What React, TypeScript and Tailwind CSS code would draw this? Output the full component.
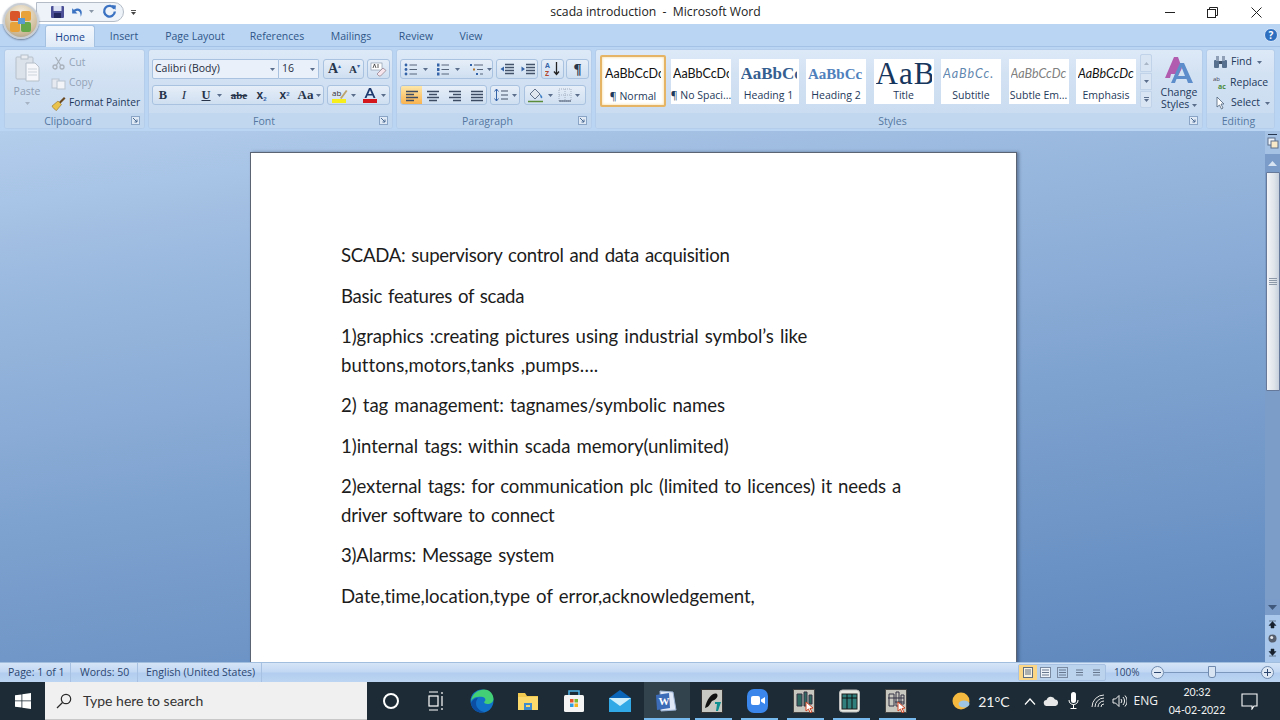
import React from "react";

const ui = "font-['Open_Sans',sans-serif]";

function Caret({ c = "#5b6f8c" }: { c?: string }) {
  return (
    <svg width="5" height="3" viewBox="0 0 5 3" className="shrink-0">
      <path d="M0 0h5L2.500 3z" fill={c} />
    </svg>
  );
}

function Launcher() {
  return (
    <svg width="9" height="9" viewBox="0 0 9 9" className="shrink-0">
      <rect x=".5" y=".5" width="8" height="8" fill="#dfe9f5" stroke="#8aa5c6" />
      <path d="M2 2l4 4M6 3.500V6H3.500" stroke="#4a6a92" fill="none" />
    </svg>
  );
}

function Group({ w, label, children, launcher = true }: { w: string; label: string; children: React.ReactNode; launcher?: boolean }) {
  return (
    <div className={`${w} h-full flex flex-col rounded-[3px] border border-[#b3cdea] bg-[linear-gradient(180deg,#dde9f7_0%,#d3e2f3_30%,#c7daf0_100%)] overflow-hidden`}>
      <div className="flex-1 min-h-0">{children}</div>
      <div className="h-[15px] shrink-0 flex items-center bg-[#c1d7f0] pr-[4px]">
        <span className="flex-1 text-center text-[10.5px] text-[#55779f] leading-none pt-[1px]">{label}</span>
        {launcher && <Launcher />}
      </div>
    </div>
  );
}

function BtnBox({ w, children, m = "" }: { w: string; children: React.ReactNode; m?: string }) {
  return (
    <div className={`${w} ${m} h-[20px] flex items-center rounded-[3px] border border-[#a9c2df] bg-[linear-gradient(180deg,#e6eef8,#cfdff1)] shrink-0 overflow-hidden`}>
      {children}
    </div>
  );
}

function Cell({ w, children, cls = "justify-center" }: { w: string; children: React.ReactNode; cls?: string }) {
  return <div className={`${w} h-full flex items-center gap-[3px] shrink-0 ${cls}`}>{children}</div>;
}

function Lines({ kind }: { kind: "l" | "c" | "r" | "j" }) {
  const rows = [2, 5, 8, 11];
  const short = [0, 1, 0, 1];
  return (
    <svg width="14" height="13" viewBox="0 0 14 13">
      {rows.map((y, i) => {
        let x1 = 1, x2 = 13;
        if (short[i] && kind === "l") x2 = 9;
        if (short[i] && kind === "r") x1 = 5;
        if (short[i] && kind === "c") { x1 = 3; x2 = 11; }
        return <path key={y} d={`M${x1} ${y + 0.5}H${x2}`} stroke="#3d4c63" strokeWidth="1.6" />;
      })}
    </svg>
  );
}

function BulletIcon({ num }: { num?: boolean }) {
  return (
    <svg width="14" height="13" viewBox="0 0 14 13">
      {[2, 6.5, 11].map((y) => (
        <g key={y}>
          {num ? <rect x="1" y={y - 1.5} width="2.5" height="3" fill="#3563a8" /> : <circle cx="2" cy={y} r="1.4" fill="#3563a8" />}
          <path d={`M5.5 ${y}H13`} stroke="#57657a" strokeWidth="1" />
        </g>
      ))}
    </svg>
  );
}

function MultiIcon() {
  return (
    <svg width="15" height="13" viewBox="0 0 15 13">
      <rect x="1" y="1" width="2" height="2" fill="#3563a8" />
      <path d="M5 2H14" stroke="#57657a" />
      <rect x="4" y="5.500" width="2" height="2" fill="#b2772d" />
      <path d="M8 6.500H14" stroke="#57657a" />
      <rect x="7" y="10" width="2" height="2" fill="#3563a8" />
      <path d="M11 11H14" stroke="#57657a" />
    </svg>
  );
}

function IndentIcon({ flip }: { flip?: boolean }) {
  return (
    <svg width="15" height="13" viewBox="0 0 15 13">
      {[1.5, 4.5, 7.5, 10.5].map((y) => (
        <path key={y} d={`M5 ${y}H14`} stroke="#44536a" strokeWidth="1.3" />
      ))}
      <path d={flip ? "M0.5 6L4 3.500V8.500z" : "M4 6L0.5 3.500V8.500z"} fill="#3563a8" />
    </svg>
  );
}

function StyleItem({ label, preview, cls }: { label: string; preview: string; cls: string }) {
  return (
    <div className="w-[60px] h-[45px] bg-white flex flex-col items-center shrink-0 overflow-hidden">
      <div className={`h-[30px] w-[56px] flex items-center justify-start overflow-hidden whitespace-nowrap leading-[30px] ${cls}`}>{preview}</div>
      <div className="text-[10.5px] leading-[12px] text-[#1e395b] whitespace-nowrap">{label}</div>
    </div>
  );
}

function Ribbon() {
  return (
    <div className={`h-[84px] flex gap-[3px] pl-[4px] pr-[3px] pt-[2px] pb-[2px] bg-[#bad5f4] ${ui}`}>
      <Group w="w-[141px]" label="Clipboard">
        <div className="flex h-full">
          <div className="w-[42px] ml-[1px] flex flex-col items-center pt-[4px]">
            <svg width="27" height="28" viewBox="0 0 27 28">
              <rect x="2" y="3" width="17" height="22" rx="1" fill="#dbe2ea" stroke="#b6bfca" />
              <rect x="7" y="1" width="7" height="4" fill="#e9edf2" stroke="#b6bfca" />
              <path d="M12 9h9l4 4v14H12z" fill="#f5f7fa" stroke="#b6bfca" />
              <path d="M14 15h9M14 18h9M14 21h9" stroke="#ced5dd" />
            </svg>
            <div className="text-[10.5px] text-[#8f9eb2] mt-[2px] leading-[14px]">Paste</div>
            <div className="mt-[4px]"><Caret c="#a6b3c4" /></div>
          </div>
          <div className="flex flex-col pt-[2px] ml-[3px]">
            <div className="h-[21px] flex items-center gap-[3px]">
              <svg width="15" height="14" viewBox="0 0 14 14"><path d="M4 1l5 8M10 1L5 9" stroke="#a9b1bb" strokeWidth="1.2" fill="none" /><circle cx="3.5" cy="11" r="2" fill="none" stroke="#a9b1bb" strokeWidth="1.3" /><circle cx="10.5" cy="11" r="2" fill="none" stroke="#a9b1bb" strokeWidth="1.3" /></svg>
              <span className="text-[10.2px] text-[#94a3b6]">Cut</span>
            </div>
            <div className="h-[20px] flex items-center gap-[3px]">
              <svg width="15" height="13" viewBox="0 0 15 13"><rect x="1" y="2" width="7" height="9" fill="#e6eaf0" stroke="#b9c3cf" /><rect x="6" y="4" width="8" height="8" fill="#f2f4f7" stroke="#b9c3cf" /></svg>
              <span className="text-[10.2px] text-[#94a3b6]">Copy</span>
            </div>
            <div className="h-[20px] flex items-center gap-[3px]">
              <svg width="15" height="15" viewBox="0 0 15 15"><path d="M8 6l5-5 1.500 1.500-5 5z" fill="#6b4a22" /><path d="M1 10l6-5 3.500 3.500-5 6c-1.500-.5-3.500-2.500-4.500-4.500z" fill="#e8c24b" stroke="#93702a" strokeWidth=".6" /></svg>
              <span className="text-[10.2px] text-[#1e395b] whitespace-nowrap">Format Painter</span>
            </div>
          </div>
        </div>
      </Group>

      <Group w="w-[245px]" label="Font">
        <div className="pl-[3px] pt-[9px]">
          <div className="flex h-[20px]">
            <div className="w-[127px] h-[20px] flex items-center justify-between border border-[#a9c2df] bg-[#e9f0f9] pl-[2px] pr-[3px] rounded-l-[2px]">
              <span className="text-[10.5px] text-[#1f2c40]">Calibri (Body)</span>
              <Caret />
            </div>
            <div className="w-[40px] h-[20px] flex items-center justify-between border border-l-0 border-[#a9c2df] bg-[#e9f0f9] pl-[3px] pr-[3px] rounded-r-[2px]">
              <span className="text-[10.5px] text-[#1f2c40]">16</span>
              <Caret />
            </div>
            <BtnBox w="w-[41px]" m="ml-[4px]">
              <Cell w="w-[21px]"><span className="font-['Liberation_Serif',serif] font-bold text-[14px] text-[#28364c] leading-none">A</span><span className="text-[6px] -ml-[3px] -mt-[6px] text-[#3563a8]">▴</span></Cell>
              <Cell w="w-[19px]"><span className="font-['Liberation_Serif',serif] font-bold text-[11px] text-[#28364c] leading-none">A</span><span className="text-[6px] -ml-[3px] -mt-[6px] text-[#3563a8]">▾</span></Cell>
            </BtnBox>
            <BtnBox w="w-[23px]" m="ml-[3px]">
              <Cell w="w-full">
                <svg width="17" height="15" viewBox="0 0 17 15"><rect x="1" y="1" width="11" height="7" fill="#fff" stroke="#7c8ba0" strokeWidth=".6" /><path d="M3 6l1.500-4L6 6M8 6V2" stroke="#333" strokeWidth=".8" fill="none" /><path d="M7 12l6-6 3 2.500-5.500 5.500H9z" fill="#f7e5ee" stroke="#8c7b86" strokeWidth=".7" /></svg>
              </Cell>
            </BtnBox>
          </div>
          <div className="flex mt-[6px]">
            <BtnBox w="w-[172px]">
              <Cell w="w-[20px]"><span className="font-['Liberation_Serif',serif] font-bold text-[12.5px] text-[#27344a]">B</span></Cell>
              <Cell w="w-[22px]"><span className="font-['Liberation_Serif',serif] italic text-[13px] text-[#27344a]">I</span></Cell>
              <Cell w="w-[33px]"><span className="font-['Liberation_Serif',serif] font-bold underline text-[12.5px] text-[#27344a]">U</span><span className="ml-[3px]"><Caret /></span></Cell>
              <Cell w="w-[22px]"><span className="font-['Liberation_Serif',serif] line-through font-bold text-[11px] text-[#27344a]">abe</span></Cell>
              <Cell w="w-[23px]"><span className="font-['Liberation_Sans',sans-serif] font-bold text-[12px] text-[#27344a]">x<sub className="text-[6px] text-[#3563a8]">2</sub></span></Cell>
              <Cell w="w-[23px]"><span className="font-['Liberation_Sans',sans-serif] font-bold text-[12px] text-[#27344a]">x<sup className="text-[6px] text-[#3563a8]">2</sup></span></Cell>
              <Cell w="w-[27px]"><span className="font-['Liberation_Serif',serif] font-bold text-[13px] text-[#27344a]">Aa</span><Caret /></Cell>
            </BtnBox>
            <BtnBox w="w-[63px]" m="ml-[3px]">
              <Cell w="w-[31px]">
                <svg width="17" height="17" viewBox="0 0 17 17"><rect x="1" y="12" width="14" height="4" fill="#f6ee1d" /><text x="1" y="9" fontSize="8" fontFamily="Open Sans" fill="#333">ab</text><path d="M9 11l6-8 1.500 1-6 8z" fill="#bda36d" /></svg>
                <Caret />
              </Cell>
              <Cell w="w-[30px]">
                <svg width="16" height="16" viewBox="0 0 16 16"><rect x="1" y="12" width="14" height="4" fill="#d4161d" /><path d="M2.500 11L7 1h2l4.500 10h-2l-1-2.500h-5L4.500 11zM6.300 7h3.400L8 3z" fill="#1f3a6e" /></svg>
                <Caret />
              </Cell>
            </BtnBox>
          </div>
        </div>
      </Group>

      <Group w="w-[196px]" label="Paragraph">
        <div className="pl-[3px] pt-[9px]">
          <div className="flex">
            <BtnBox w="w-[93px]">
              <Cell w="w-[33px]" cls="justify-start pl-[3px] gap-[5px]"><BulletIcon /><Caret /></Cell>
              <Cell w="w-[33px]" cls="justify-start pl-[2px] gap-[5px]"><BulletIcon num /><Caret /></Cell>
              <Cell w="w-[26px]" cls="justify-start pl-[2px] gap-[2px]"><MultiIcon /><Caret /></Cell>
            </BtnBox>
            <BtnBox w="w-[42px]" m="ml-[3px]">
              <Cell w="w-[21px]"><IndentIcon flip /></Cell>
              <Cell w="w-[20px]"><IndentIcon /></Cell>
            </BtnBox>
            <BtnBox w="w-[23px]" m="ml-[3px]">
              <Cell w="w-full">
                <svg width="16" height="16" viewBox="0 0 16 16"><text x="0" y="6.500" fontSize="7" fontWeight="700" fontFamily="Open Sans" fill="#3563a8">A</text><text x="0" y="15" fontSize="7" fontWeight="700" fontFamily="Open Sans" fill="#b2472d">Z</text><path d="M11.500 1v12M9 10.500l2.500 3 2.500-3" stroke="#222" strokeWidth="1.300" fill="none" /></svg>
              </Cell>
            </BtnBox>
            <BtnBox w="w-[23px]" m="ml-[2px]">
              <Cell w="w-full"><span className="font-['Liberation_Serif',serif] font-bold text-[15px] leading-none text-[#27344a]">¶</span></Cell>
            </BtnBox>
          </div>
          <div className="flex mt-[6px]">
            <BtnBox w="w-[87px]">
              <Cell w="w-[21px]" cls="justify-center bg-[linear-gradient(180deg,#fde6a8,#f9b34f)]"><Lines kind="l" /></Cell>
              <Cell w="w-[22px]"><Lines kind="c" /></Cell>
              <Cell w="w-[22px]"><Lines kind="r" /></Cell>
              <Cell w="w-[21px]"><Lines kind="j" /></Cell>
            </BtnBox>
            <BtnBox w="w-[30px]" m="ml-[3px]">
              <Cell w="w-full">
                <svg width="15" height="14" viewBox="0 0 15 14"><path d="M2.500 1v12M.5 3.500l2-2.500 2 2.500M.5 10.500l2 2.500 2-2.500" stroke="#3563a8" fill="none" /><path d="M7 3h7M7 7h7M7 11h7" stroke="#44536a" strokeWidth="1.200" /></svg>
                <Caret />
              </Cell>
            </BtnBox>
            <BtnBox w="w-[62px]" m="ml-[4px]">
              <Cell w="w-[30px]">
                <svg width="18" height="16" viewBox="0 0 18 16"><path d="M3 7l5-5 5 5-5 5z" fill="#dfe6ee" stroke="#5f7088" /><path d="M13 7c2 2 3 3 2 4s-2-1-2-4z" fill="#3f7ec4" /><path d="M1 14.500h15" stroke="#5b8c3b" strokeWidth="1.500" /></svg>
                <Caret />
              </Cell>
              <Cell w="w-[28px]">
                <svg width="14" height="14" viewBox="0 0 14 14"><rect x="1" y="1" width="12" height="12" fill="none" stroke="#a3b0c1" strokeDasharray="1 1" /><path d="M7 1v12M1 7h12" stroke="#a3b0c1" strokeDasharray="1 1" /><path d="M1 13h12" stroke="#44536a" /></svg>
                <Caret />
              </Cell>
            </BtnBox>
          </div>
        </div>
      </Group>

      <Group w="w-[608px]" label="Styles">
        <div className="flex h-full pl-[4px] pt-[5px]">
          <div className="w-[66px] h-[52px] rounded-[2px] border-2 border-[#e5b565] bg-white flex flex-col items-center shrink-0 overflow-hidden shadow-[inset_0_0_3px_#f5d58e]">
            <div className="h-[33px] w-[56px] pt-[1px] flex items-center justify-start overflow-hidden whitespace-nowrap text-[12.5px] text-[#111] font-['Lato',sans-serif]">AaBbCcDc</div>
            <div className="text-[10.5px] leading-[12px] text-[#1e395b]">¶ Normal</div>
          </div>
          <div className="flex gap-[7.5px] ml-[5px] pt-[4px]">
            <StyleItem label="¶ No Spaci..." preview="AaBbCcDc" cls="text-[12.5px] text-[#111] font-['Lato',sans-serif]" />
            <StyleItem label="Heading 1" preview="AaBbCc" cls="font-['Liberation_Serif',serif] font-bold text-[17px] text-[#365f91]" />
            <StyleItem label="Heading 2" preview="AaBbCc" cls="font-['Liberation_Serif',serif] font-bold text-[15px] text-[#4f81bd]" />
            <StyleItem label="Title" preview="AaB" cls="font-['Liberation_Serif',serif] text-[31px] tracking-[1px] text-[#17365d]" />
            <StyleItem label="Subtitle" preview="AaBbCc." cls="font-['Lato',sans-serif] italic tracking-[1px] text-[12.500px] text-[#5f87b0]" />
            <StyleItem label="Subtle Em..." preview="AaBbCcDc" cls="font-['Lato',sans-serif] italic text-[12.5px] text-[#808080]" />
            <StyleItem label="Emphasis" preview="AaBbCcDc" cls="font-['Lato',sans-serif] italic text-[12.5px] text-[#111]" />
          </div>
          <div className="w-[12px] ml-[4px] flex flex-col gap-[1px] shrink-0 -mt-[1px]">
            <div className="h-[18px] flex items-center justify-center rounded-t-[2px] bg-[#d9e5f3] border border-[#c0d3e9]"><svg width="5" height="3" viewBox="0 0 5 3"><path d="M0 3h5L2.500 0z" fill="#a9b6c6" /></svg></div>
            <div className="h-[17px] flex items-center justify-center bg-[#d9e5f3] border border-[#c0d3e9]"><Caret /></div>
            <div className="h-[17px] flex flex-col items-center justify-center gap-[1px] rounded-b-[2px] bg-[#d9e5f3] border border-[#c0d3e9]"><div className="w-[5px] h-[1px] bg-[#5b6f8c]" /><Caret /></div>
          </div>
          <div className="w-[48px] ml-[3px] flex flex-col items-center shrink-0 pt-[1px]">
            <svg width="30" height="28" viewBox="0 0 30 28">
              <path d="M1 22L10 1h4l4 11-5 10H10l1-4H7l-1 4z" fill="#b25cb0" />
              <path d="M7 27L16 7h4l9 20h-5l-1.500-4h-10L11 27zM14 20h7l-3.500-9z" fill="#5d8ecb" />
            </svg>
            <div className="text-[10.5px] leading-[12px] text-[#1e395b] text-center mt-[2px]">Change<br />Styles <span className="inline-block align-middle"><Caret /></span></div>
          </div>
        </div>
      </Group>

      <Group w="w-[69px]" label="Editing" launcher={false}>
        <div className="pl-[6px] pt-[2px]">
          <div className="h-[20px] flex items-center gap-[3px]">
            <svg width="15" height="14" viewBox="0 0 15 14"><rect x="1" y="5" width="5" height="8" rx="1" fill="#58708f" /><rect x="9" y="5" width="5" height="8" rx="1" fill="#58708f" /><rect x="3" y="1" width="3" height="5" fill="#8fa0b6" /><rect x="9" y="1" width="3" height="5" fill="#8fa0b6" /><rect x="6" y="6" width="3" height="3" fill="#3f5168" /></svg>
            <span className="text-[10.5px] text-[#1e395b]">Find</span>
            <span className="ml-[2px]"><Caret /></span>
          </div>
          <div className="h-[21px] flex items-center gap-[2px]">
            <svg width="15" height="15" viewBox="0 0 15 15"><text x="0" y="6" fontSize="6" fontFamily="Open Sans" fill="#445">ab</text><text x="5" y="14" fontSize="7" fontWeight="700" fontFamily="Open Sans" fill="#4b8b3c">ac</text></svg>
            <span className="text-[10.5px] text-[#1e395b]">Replace</span>
          </div>
          <div className="h-[20px] flex items-center gap-[3px]">
            <svg width="15" height="14" viewBox="0 0 15 14"><path d="M4 1v10l2.500-2 2 4 1.500-1-2-4h3z" fill="#fff" stroke="#4d5f77" strokeWidth=".8" /></svg>
            <span className="text-[10.5px] text-[#1e395b]">Select</span>
            <span className="ml-[2px]"><Caret /></span>
          </div>
        </div>
      </Group>
    </div>
  );
}

function Tabs() {
  const tabs: [string, string][] = [
    ["Insert", "w-[58px]"],
    ["Page Layout", "w-[84px]"],
    ["References", "w-[80px]"],
    ["Mailings", "w-[68px]"],
    ["Review", "w-[62px]"],
    ["View", "w-[48px]"],
  ];
  return (
    <div className={`h-[23px] flex items-end bg-[#bad5f4] ${ui} border-b border-[#a3c2e6]`}>
      <div className="w-[45px] shrink-0" />
      <div className="w-[50px] h-[22px] -mb-px pt-[2px] flex items-center justify-center rounded-t-[3px] border border-b-0 border-[#a4c1e2] bg-[linear-gradient(180deg,#f4f8fd,#dfeaf7)] text-[10.5px] text-[#15428b]">Home</div>
      {tabs.map(([t, w]) => (
        <div key={t} className={`${w} h-[22px] pt-[3px] flex items-center justify-center text-[10.5px] text-[#2f5587] shrink-0`}>{t}</div>
      ))}
      <div className="flex-1" />
      <div className="h-[22px] flex items-center pr-[2px]">
        <div className="w-[14px] h-[14px] rounded-full bg-[#2f6fc0] border border-[#d6e6f8] flex items-center justify-center text-[10px] font-bold text-white leading-none">?</div>
      </div>
    </div>
  );
}

function TitleBar() {
  return (
    <div className={`h-[24px] bg-white flex items-center relative ${ui}`}>
      <div className="absolute left-[3px] top-[3px] z-10 w-[36px] h-[36px] rounded-full border-2 border-[#c9ced4] bg-[radial-gradient(circle_at_50%_30%,#fbf4e6,#cbb896_70%,#9d9788)] flex items-center justify-center shadow-[0_1px_2px_#6c7c92]">
        <svg width="24" height="24" viewBox="0 0 24 24">
          <rect x="1" y="2" width="10" height="10" rx="2" fill="#d9562a" />
          <rect x="12" y="2" width="10" height="10" rx="2" fill="#e8a23a" />
          <rect x="1" y="13" width="10" height="10" rx="2" fill="#e8a23a" />
          <rect x="12" y="13" width="10" height="10" rx="2" fill="#65a84a" />
          <rect x="9" y="9" width="7" height="6" fill="#5a9ad0" />
        </svg>
      </div>
      <div className="ml-[36px] w-[88px] h-[20px] mt-[-1px] rounded-r-[10px] border border-[#b3bcc7] bg-[#eef3f9] flex items-center shrink-0">
        <svg width="15" height="14" viewBox="0 0 15 14" className="ml-[13px]"><rect x="1" y="1" width="13" height="12" rx="1" fill="#4a4f96" /><rect x="3.500" y="1" width="8" height="5" fill="#dde3f3" /><rect x="4" y="8" width="7" height="5" fill="#23285f" /></svg>
        <svg width="15" height="14" viewBox="0 0 14 13" className="ml-[5px]"><path d="M2 3v5h5L5 6c3-2 5 0 5 5 3-6-1-10-6.500-6.500z" fill="#3b73c2" /></svg>
        <span className="ml-[4px]"><Caret c="#8a97a8" /></span>
        <svg width="15" height="15" viewBox="0 0 14 14" className="ml-[8px]"><path d="M11.500 4.500A5 5 0 1 0 12 7" fill="none" stroke="#3b73c2" strokeWidth="2.200" /><path d="M9 1l4 .5-.5 4z" fill="#3b73c2" /></svg>
      </div>
      <div className="ml-[7px] flex flex-col items-center gap-[1px]">
        <div className="w-[5px] h-px bg-[#555]" />
        <Caret c="#444" />
      </div>
      <div className="flex-1 text-center text-[12.2px] text-[#222] whitespace-nowrap pl-[30px]">scada introduction&nbsp; - &nbsp;Microsoft Word</div>
      <div className="flex items-center w-[135px] shrink-0 pl-[4px]">
        <div className="w-[42px] flex justify-center"><div className="w-[10px] h-px bg-[#222]" /></div>
        <div className="w-[43px] flex justify-center">
          <svg width="11" height="11" viewBox="0 0 11 11"><path d="M2.500 2.500V.5h8v8h-2" fill="none" stroke="#222" /><rect x=".5" y="2.500" width="8" height="8" fill="none" stroke="#222" /></svg>
        </div>
        <div className="w-[44px] flex justify-center">
          <svg width="11" height="11" viewBox="0 0 11 11"><path d="M.5.5l10 10M10.500.5l-10 10" stroke="#222" /></svg>
        </div>
      </div>
    </div>
  );
}

const paras: [string, string][][] = [
  [["SCADA: supervisory control and data acquisition", "tracking-[-0.29px]"]],
  [["Basic features of scada", "tracking-[-0.3px]"]],
  [
    ["1)graphics :creating pictures using industrial symbol’s like", "tracking-[-0.09px]"],
    ["buttons,motors,tanks ,pumps….", "tracking-[0.03px]"],
  ],
  [["2) tag management: tagnames/symbolic names", "tracking-[-0.07px]"]],
  [["1)internal tags: within scada memory(unlimited)", "tracking-[-0.06px]"]],
  [
    ["2)external tags: for communication plc (limited to licences) it needs a", "tracking-[-0.14px]"],
    ["driver software to connect", "tracking-[-0.25px]"],
  ],
  [["3)Alarms: Message system", "tracking-[-0.19px]"]],
  [["Date,time,location,type of error,acknowledgement,", "tracking-[-0.04px]"]],
];

function DocArea() {
  return (
    <div className="flex-1 min-h-0 flex bg-[linear-gradient(172deg,#b3cdec_0%,#9dbbe0_20%,#7fa3d0_55%,#5e87bd_100%)] overflow-hidden">
      <div className="w-[250px] shrink-0" />
      <div className="w-[767px] h-[600px] mt-[21px] shrink-0 bg-white border border-[#5a6472] border-b-0 shadow-[2px_0_3px_rgba(40,60,90,.5)] pl-[90px] pt-[88px] font-['Lato',sans-serif] text-[#1c1c1c] text-[18.6px] leading-[28.500px] [word-spacing:1.500px]">
        {paras.map((p, i) => (
          <div key={i} className="mb-[12px] whitespace-nowrap">
            {p.map(([l, t]) => (
              <div key={l} className={t}>{l}</div>
            ))}
          </div>
        ))}
      </div>
      <div className="flex-1" />
      <div className="w-[15px] shrink-0 flex flex-col items-center bg-[#7d9dc9]">
        <div className="w-[15px] h-[23px] bg-[#a5c2e5] flex flex-col items-center pt-[3px] gap-[2px]">
          <div className="w-[9px] h-px bg-[#26364f]" />
          <svg width="12" height="12" viewBox="0 0 12 12"><rect x="1" y="1" width="7" height="7" fill="#eef3f9" stroke="#5f708a" /><rect x="4" y="4" width="7" height="7" fill="#f8e9c8" stroke="#5f708a" /></svg>
        </div>
        <div className="w-[15px] h-[18px] bg-[#7b9cc9] flex items-center justify-center">
          <svg width="9" height="5" viewBox="0 0 9 5"><path d="M0 5h9L4.500 0z" fill="#d9e4f2" /></svg>
        </div>
        <div className="w-[14px] h-[219px] rounded-[1px] border border-[#66799a] bg-[linear-gradient(90deg,#f2f4f7,#dfe4ea_60%,#c6cfdc)] flex flex-col items-center justify-center gap-[1px]">
          <div className="w-[8px] h-px bg-[#8c98a8]" /><div className="w-[8px] h-px bg-[#8c98a8]" /><div className="w-[8px] h-px bg-[#8c98a8]" /><div className="w-[8px] h-px bg-[#8c98a8]" />
        </div>
        <div className="flex-1" />
        <div className="w-[15px] h-[16px] bg-[#7b9cc9] flex items-center justify-center">
          <svg width="9" height="5" viewBox="0 0 9 5"><path d="M0 0h9L4.500 5z" fill="#40587c" /></svg>
        </div>
        <div className="w-[15px] h-[47px] bg-[#a9c7ea] flex flex-col items-center justify-around py-[2px]">
          <svg width="9" height="9" viewBox="0 0 9 9"><path d="M1 1h7M4.500 1.500L1 5.500h2v2.500h3V5.500h2z" fill="#17202e" stroke="#17202e" strokeWidth=".5" /></svg>
          <svg width="9" height="9" viewBox="0 0 9 9"><circle cx="4.500" cy="4.500" r="4" fill="#555f6e" /><circle cx="3.700" cy="3.500" r="1.500" fill="#e6e9ee" /></svg>
          <svg width="9" height="9" viewBox="0 0 9 9"><path d="M1 8h7M4.500 7.500L1 3.500h2V1h3v2.500h2z" fill="#17202e" stroke="#17202e" strokeWidth=".5" /></svg>
        </div>
      </div>
    </div>
  );
}

function StatusBar() {
  return (
    <div className={`h-[20px] shrink-0 flex items-center bg-[linear-gradient(180deg,#d6e5f7,#c2d8f3_45%,#b2cdef_55%,#bcd5f2)] border-t border-[#a2bedf] ${ui} text-[10.500px] text-[#2c4670]`}>
      <div className="w-[71px] h-full flex items-center pl-[8px] border-r border-[#a6c1e2] whitespace-nowrap">Page: 1 of 1</div>
      <div className="w-[67px] h-full flex items-center pl-[9px] border-r border-[#a6c1e2] whitespace-nowrap">Words: 50</div>
      <div className="w-[124px] h-full flex items-center pl-[8px] border-r border-[#a6c1e2] whitespace-nowrap">English (United States)</div>
      <div className="flex-1" />
      <div className="w-[88px] h-[17px] flex items-center border border-[#a6c1e2] bg-[#bcd3ee] rounded-[2px] shrink-0">
        <div className="w-[18px] h-full bg-[#fbd684] flex items-center justify-center"><svg width="10" height="11" viewBox="0 0 10 11"><rect x=".5" y=".5" width="9" height="10" fill="#f9f2df" stroke="#5f6d80" /><path d="M2 3h6M2 5h6M2 7h6" stroke="#5f6d80" /></svg></div>
        {[0, 1, 2, 3].map((i) => (
          <div key={i} className="w-[17px] h-full flex items-center justify-center"><svg width="11" height="11" viewBox="0 0 11 11"><rect x=".5" y=".5" width="10" height="10" fill={i === 0 ? "#eef3f9" : "none"} stroke={i === 0 || i === 1 ? "#7a8aa0" : "none"} /><path d="M2 3h7M2 5.500h7M2 8h7" stroke="#66768c" /></svg></div>
        ))}
      </div>
      <div className="w-[36px] ml-[8px] text-[10px] shrink-0">100%</div>
      <div className="w-[13px] h-[13px] rounded-full border border-[#6f8aae] bg-[#dfe9f6] flex items-center justify-center shrink-0 ml-[1px]"><div className="w-[7px] h-px bg-[#2c4670]" /></div>
      <div className="w-[97px] h-px bg-[#7d98bd] relative shrink-0">
        <div className="absolute left-[44px] -top-[6px] w-[8px] h-[12px] bg-[#d9e4f2] border border-[#6f8aae] rounded-b-[3px]" />
      </div>
      <div className="w-[13px] h-[13px] rounded-full border border-[#6f8aae] bg-[#dfe9f6] flex items-center justify-center shrink-0 relative mr-[6px]"><div className="w-[7px] h-px bg-[#2c4670]" /><div className="absolute w-px h-[7px] bg-[#2c4670]" /></div>
    </div>
  );
}

function AppIcon({ kind }: { kind: string }) {
  if (kind === "cortana")
    return <div className="w-[16px] h-[16px] rounded-full border-[2px] border-white" />;
  if (kind === "task")
    return (
      <svg width="17" height="20" viewBox="0 0 17 20" fill="none" stroke="#fff" strokeWidth="1.200"><path d="M1 1h9M1 19h9" /><rect x="1" y="5" width="9" height="10" /><path d="M14 1v2M14 5v10M14 17v2" /></svg>
    );
  if (kind === "edge")
    return (
      <svg width="24" height="24" viewBox="0 0 24 24"><circle cx="12" cy="12" r="11.500" fill="#1171c9" /><path d="M1 12C2 4 9 .5 14 .5c6 0 9.500 5 9.500 9.500 0 3-3 5-6 5-2 0-3.500-1-3.500-2 2-1 2-4-1-5C8 7 3 8 1 12z" fill="#43cf76" /><path d="M6 14c0 5 4 8 8 9-6 2-13-3-13-9 1-3 4-5 7-5-1 1-2 3-2 5z" fill="#0b4ea2" /></svg>
    );
  if (kind === "folder")
    return (
      <svg width="22" height="20" viewBox="0 0 22 20"><path d="M1 2h7l2 3h11v14H1z" fill="#f2c94f" /><rect x="1" y="6" width="20" height="13" fill="#fbd96b" /><rect x="7" y="12" width="8" height="7" fill="#3e8bd0" /><rect x="9" y="14" width="4" height="2" fill="#fbd96b" /></svg>
    );
  if (kind === "store")
    return (
      <svg width="22" height="24" viewBox="0 0 22 24"><path d="M6 6V2h10v4" fill="none" stroke="#4db2e8" strokeWidth="1.500" /><rect x="1" y="6" width="20" height="17" rx="1.500" fill="#f4f4f4" /><rect x="7" y="10" width="3.500" height="3.500" fill="#e5532d" /><rect x="11.500" y="10" width="3.500" height="3.500" fill="#7db832" /><rect x="7" y="14.500" width="3.500" height="3.500" fill="#2f9de4" /><rect x="11.500" y="14.500" width="3.500" height="3.500" fill="#f6b51d" /></svg>
    );
  if (kind === "mail")
    return (
      <svg width="24" height="24" viewBox="0 0 24 24"><path d="M12 1l11 8v14H1V9z" fill="#0a64b8" /><path d="M1 9h22v14H1z" fill="#31a9e6" /><path d="M1 9l11 8 11-8" fill="#cfeffc" /></svg>
    );
  if (kind === "word")
    return (
      <svg width="22" height="24" viewBox="0 0 22 24"><path d="M5 2l13 1 3 18-15 1z" fill="#dfe8f6" stroke="#9bb2d3" /><path d="M1 6l13-2 1 15-13 2z" fill="#3c6bb8" /><text x="3.500" y="16" fontSize="11" fontWeight="700" fontFamily="Liberation Serif" fill="#fff">W</text></svg>
    );
  if (kind === "zoom")
    return (
      <div className="w-[21px] h-[24px] rounded-[7px] bg-[#3a86ea] flex items-center justify-center">
        <svg width="14" height="9" viewBox="0 0 14 9"><rect width="9" height="9" rx="2" fill="#fff" /><path d="M10 3.500L14 1v7l-4-2.500z" fill="#fff" /></svg>
      </div>
    );
  if (kind === "s1")
    return (
      <svg width="22" height="24" viewBox="0 0 22 24"><rect x=".5" y=".5" width="21" height="23" fill="#c8c8c2" stroke="#333" /><path d="M4 19C6 9 12 3 16 5c2 3-2 6-5 7-2 3-3 6-7 7z" fill="#111" /><path d="M14 13h6l-3 9h-2l1-7h-2z" fill="#0f8f8f" /></svg>
    );
  if (kind === "s2" || kind === "s4")
    return (
      <svg width="22" height="24" viewBox="0 0 22 24"><rect x=".5" y=".5" width="21" height="23" fill="#c7c7c0" stroke="#444" /><path d="M4 5h5v12H4zM11 3h3v14h-3zM16 6h3v9h-3z" fill={kind === "s2" ? "#2f6a62" : "none"} stroke="#334" /><path d="M3 9h16M10 13h9" stroke="#334" strokeWidth={kind === "s4" ? 1 : 0} /><path d="M13 13l7 6-3 .5 2 3.500-2 .5-1.500-3.500-2.500 2z" fill="#fff" stroke="#d04523" /></svg>
    );
  return (
    <svg width="21" height="24" viewBox="0 0 21 24"><rect x=".5" y="1" width="20" height="22" rx="3" fill="#e8e8e2" stroke="#bbb" /><rect x="3" y="5" width="15" height="15" fill="#2f7f7c" stroke="#222" /><path d="M8 5v15M13 5v15M3 9h15" stroke="#111" /></svg>
  );
}

function Taskbar() {
  const apps: [string, string][] = [
    ["cortana", "w-[46px]"],
    ["task", "w-[44px]"],
    ["edge", "w-[47px]"],
    ["folder", "w-[46px]"],
    ["store", "w-[46px]"],
    ["mail", "w-[46px]"],
  ];
  const running = ["word", "s1", "zoom", "s2", "s3", "s4"];
  return (
    <div className="h-[38px] shrink-0 flex bg-[#1c2b35] text-white font-['Open_Sans',sans-serif]">
      <div className="w-[45px] flex items-center justify-center shrink-0">
        <svg width="16" height="16" viewBox="0 0 16 16" fill="#fff"><path d="M0 2.300L6.500 1.400V7.500H0zM7.300 1.300L16 0V7.500H7.300zM0 8.300H6.500V14.500L0 13.700zM7.300 8.300H16V16L7.300 14.800z" /></svg>
      </div>
      <div className="w-[322px] flex items-center bg-[#f0f0f0] border-b border-[#c8c8c8] shrink-0">
        <svg width="16" height="16" viewBox="0 0 16 16" fill="none" stroke="#2a2a2a" strokeWidth="1.200" className="ml-[11px]"><circle cx="10" cy="6" r="4.700" /><path d="M6.500 9.500L1 15" /></svg>
        <span className="ml-[11px] text-[14px] text-[#333] font-['Lato',sans-serif]">Type here to search</span>
      </div>
      <div className="flex shrink-0 ml-[1px]">
        {apps.map(([k, w]) => (
          <div key={k} className={`${w} flex items-center justify-center`}><AppIcon kind={k} /></div>
        ))}
      </div>
      <div className="flex shrink-0 ml-[1px]">
        {running.map((k, i) => (
          <div key={k} className={`w-[46px] flex flex-col items-center shrink-0 ${i === 0 ? "bg-[#33434e]" : ""}`}>
            <div className="flex-1 flex items-center justify-center pt-[1px] pr-[3px]"><AppIcon kind={k} /></div>
            <div className={`h-[2px] ${i === 0 ? "w-full" : "w-[37px]"} bg-[#76b9ed]`} />
          </div>
        ))}
      </div>
      <div className="flex-1 flex items-center justify-end text-[#f2f2f2] whitespace-nowrap">
        <svg width="18" height="20" viewBox="0 0 18 20" className="mr-[8px]"><circle cx="9" cy="10" r="8.500" fill="#f6b93f" /><ellipse cx="12" cy="13" rx="5.500" ry="3.500" fill="#9ec5e3" /></svg>
        <span className="text-[14px] font-['Lato',sans-serif]">21°C</span>
        <svg width="12" height="7" viewBox="0 0 12 7" fill="none" stroke="#fff" strokeWidth="1.200" className="ml-[14px]"><path d="M1 6.500L6 1l5 5.500" /></svg>
        <svg width="16" height="10" viewBox="0 0 16 10" fill="#e8e8e8" className="ml-[7px]"><path d="M4 10a3 3 0 0 1-.5-6A4.500 4.500 0 0 1 12 3.500 3.300 3.300 0 0 1 12.500 10z" /></svg>
        <svg width="11" height="18" viewBox="0 0 11 18" className="ml-[9px]"><rect x="3" y="0" width="5" height="11" rx="2.500" fill="#fff" /><path d="M1 8c0 3 2 4.500 4.500 4.500S10 11 10 8M5.500 12.500V16M2.500 16.500h6" fill="none" stroke="#fff" /></svg>
        <svg width="14" height="14" viewBox="0 0 14 14" fill="none" stroke="#e5e5e5" className="ml-[12px]"><path d="M1 13A12 12 0 0 1 13 1M4 13a9 9 0 0 1 9-9M7 13a6 6 0 0 1 6-6M10 13a3 3 0 0 1 3-3" /></svg>
        <svg width="15" height="14" viewBox="0 0 15 14" fill="none" stroke="#f0f0f0" className="ml-[7px]"><path d="M1 5h2.500L7 1.500v11L3.500 9H1zM9 5a3 3 0 0 1 0 4M11 3a6 6 0 0 1 0 8M13 1.500a8 8 0 0 1 0 11" /></svg>
        <span className="text-[12px] ml-[7px]">ENG</span>
        <div className="w-[64px] ml-[7px] flex flex-col items-center text-[10.5px] leading-[18px] font-['Lato',sans-serif]"><span>20:32</span><span>04-02-2022</span></div>
        <div className="w-[24px] ml-[8px] mr-[19px] flex justify-center">
          <svg width="17" height="17" viewBox="0 0 17 17" fill="none" stroke="#fff" strokeWidth="1.100"><path d="M1 1h15v12h-3l-2 3v-3H1z" /></svg>
        </div>
      </div>
    </div>
  );
}

export default function App() {
  return (
    <div className="w-[1280px] h-[720px] flex flex-col overflow-hidden bg-white">
      <TitleBar />
      <Tabs />
      <Ribbon />
      <DocArea />
      <StatusBar />
      <Taskbar />
    </div>
  );
}
